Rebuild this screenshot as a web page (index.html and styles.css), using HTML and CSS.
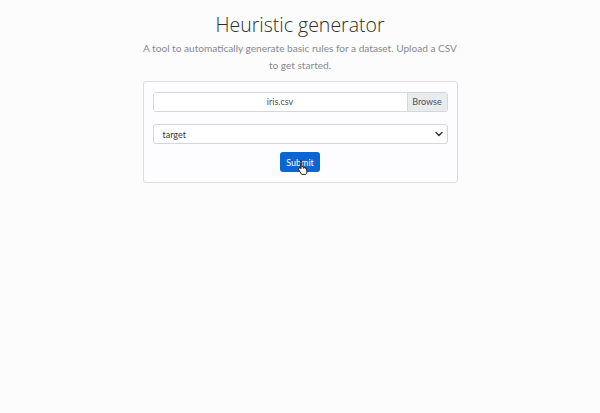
FILE: index.html
```html
<!DOCTYPE html>
<html lang="en">
<head>
<meta charset="utf-8">
<title>Heuristic generator</title>
<link rel="stylesheet" href="styles.css">
</head>
<body>
<main class="page">
  <header class="intro">
    <h1 class="title">Heuristic generator</h1>
    <p class="lead">A tool to automatically generate basic rules for a dataset. Upload a CSV to get started.</p>
  </header>
  <form class="card">
    <div class="file-input">
      <span class="file-name">iris.csv</span>
      <span class="file-browse">Browse</span>
    </div>
    <div class="select">
      <span class="select-value">target</span>
      <svg class="select-caret" width="8" height="6" viewBox="0 0 8 6"><path d="M1 1.5 L4 4.5 L7 1.5" fill="none" stroke="#343a40" stroke-width="1.5" stroke-linecap="round" stroke-linejoin="round"/></svg>
    </div>
    <div class="actions">
      <button type="button" class="btn">Submit</button>
      <svg class="cursor" width="12" height="15" viewBox="0 0 12 15">
        <path d="M3.5 1.2c.7 0 1.2.5 1.2 1.2v4.3l.3-.1c.6-.2 1.2.1 1.4.6l.1.2c.6-.3 1.3 0 1.5.5.6-.2 1.2.1 1.4.7l.4 2.6c.2 1.3-.2 2.4-1 3.2H4.7L1.6 9.6c-.4-.5-.3-1.2.2-1.5.4-.3 1-.2 1.3.2l.3.4V2.4c0-.7.5-1.2 1.1-1.2z" fill="#fff" stroke="#111" stroke-width="0.9" stroke-linejoin="round"/>
        <path d="M4.7 6.8v2M6.6 7.2v1.6M8.3 7.7v1.3" stroke="#111" stroke-width="0.7"/>
      </svg>
    </div>
  </form>
</main>
</body>
</html>
```
FILE: styles.css
```css
html, body {
  margin: 0;
  padding: 0;
}
body {
  background: #fcfcfd;
  font-family: "Open Sans", sans-serif;
  color: #212529;
}
.page {
  display: flex;
  flex-direction: column;
  align-items: center;
  padding-top: 13px;
}
.intro {
  text-align: center;
  width: 320px;
}
.title {
  margin: 0;
  font-size: 19.5px;
  font-weight: 300;
  line-height: 24px;
  color: #2e2e2e;
}
.lead {
  margin: 3px 0 0;
  font-family: Lato, sans-serif;
  font-size: 10.1px;
  font-weight: 400;
  line-height: 17px;
  color: #858a90;
}
.card {
  box-sizing: border-box;
  margin-top: 7px;
  width: 315px;
  padding: 10px 9px 10px;
  border: 1px solid #dcdde0;
  border-radius: 3px;
  display: flex;
  flex-direction: column;
  background: #fdfcfe;
}
.file-input {
  box-sizing: border-box;
  display: flex;
  height: 20px;
  border: 1px solid #d4d6da;
  border-radius: 3px;
  overflow: hidden;
  font-family: Lato, sans-serif;
  font-size: 9px;
  line-height: 18px;
  color: #495057;
}
.file-name {
  flex: 1;
  text-align: center;
  background: #fff;
}
.file-browse {
  width: 39px;
  text-align: center;
  background: #e9ecef;
  border-left: 1px solid #d4d6da;
  color: #495057;
}
.select {
  box-sizing: border-box;
  margin-top: 12px;
  display: flex;
  align-items: center;
  justify-content: space-between;
  height: 20px;
  border: 1px solid #d4d6da;
  border-radius: 3px;
  background: #fff;
  padding: 0 4px 0 9px;
  font-family: Lato, sans-serif;
  font-size: 9px;
  color: #343a40;
}
.actions {
  margin-top: 8px;
  display: flex;
  justify-content: center;
  position: relative;
}
.btn {
  width: 40px;
  height: 20px;
  padding: 0;
  border: none;
  border-radius: 3px;
  background: #0b66d4;
  color: #fff;
  font-family: Lato, sans-serif;
  font-size: 9px;
}
.cursor {
  position: absolute;
  left: 144px;
  top: 8px;
}
```
